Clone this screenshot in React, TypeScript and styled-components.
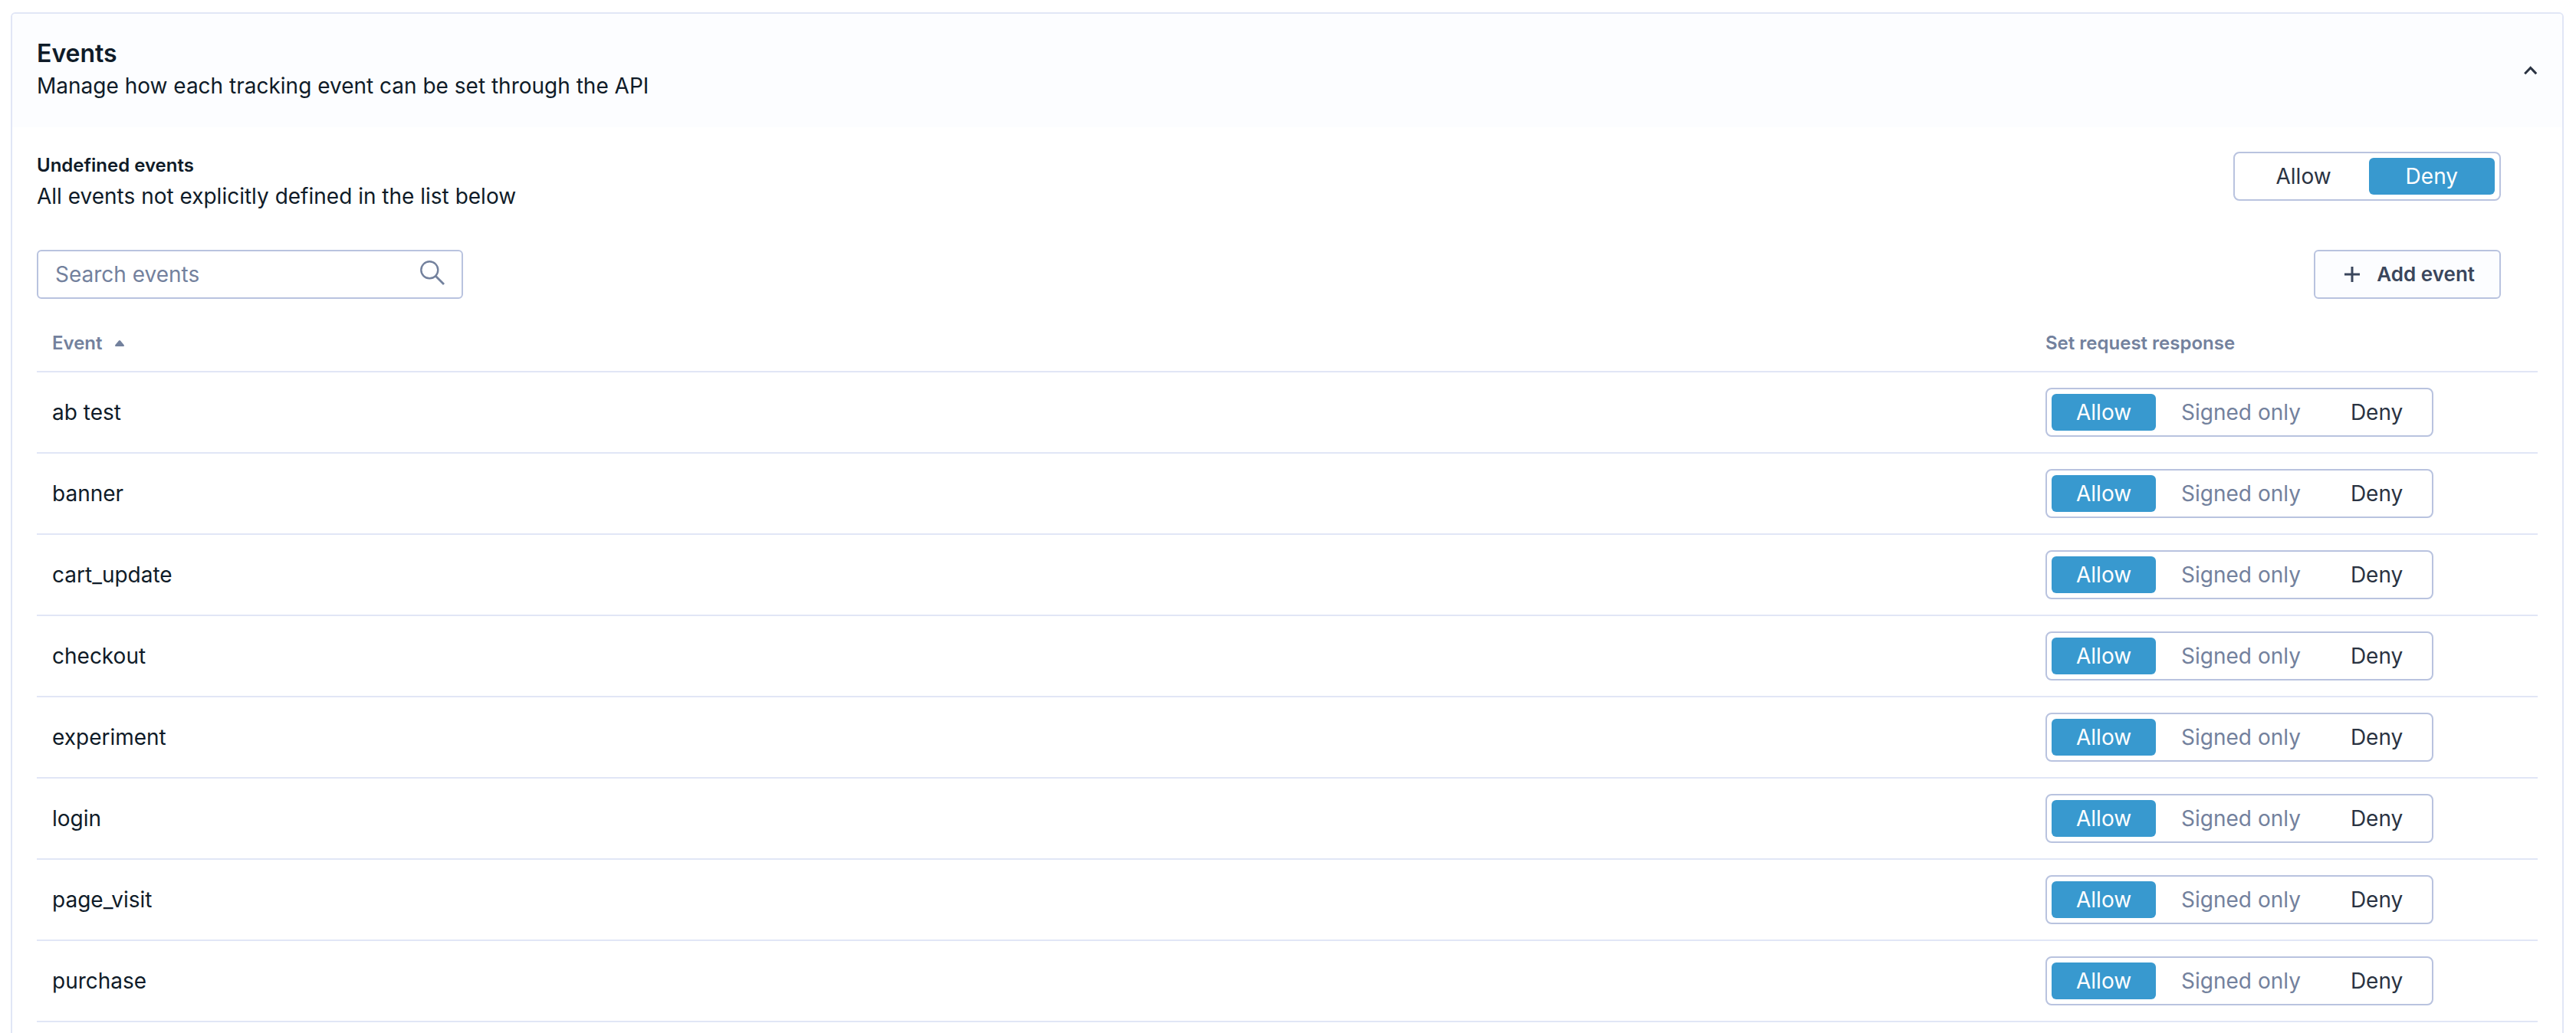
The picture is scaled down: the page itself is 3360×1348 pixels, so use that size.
import React, { useState } from "react";
import styled, { createGlobalStyle } from "styled-components";

const color = {
  ink: "#0f1b28",
  control: "#2a3342",
  button: "#3a465c",
  muted: "#73819d",
  line: "#e1e6f6",
  outline: "#b9c3df",
  tint: "#fcfdff",
  accent: "#3899cf",
};

const GlobalStyle = createGlobalStyle`
  *, *::before, *::after { box-sizing: border-box; }
  body { margin: 0; background: #fff; }
  body, button, input { font-family: Inter, "Liberation Sans", sans-serif; }
`;

const Page = styled.main`
  height: 100vh;
  overflow: hidden;
  padding: 16px 16px 0 14px;
  color: ${color.ink};
  font-size: 28px;
  line-height: 44px;
`;

const Card = styled.section`
  border: 2px solid ${color.line};
  border-radius: 6px;
`;

const CardHeader = styled.header`
  display: flex;
  align-items: center;
  justify-content: space-between;
  padding: 32px;
  background: ${color.tint};
  border-radius: 4px 4px 0 0;
`;

const Title = styled.h2`
  margin: 0;
  font-size: 32px;
  line-height: 40px;
  font-weight: 600;
`;

const Text = styled.p`
  margin: 0;
`;

const IconButton = styled.button`
  display: flex;
  padding: 0;
  border: 0;
  background: none;
  color: ${color.control};
  cursor: pointer;
`;

const CardBody = styled.div`
  padding: 32px;
`;

const Bar = styled.div`
  display: flex;
  align-items: flex-start;
  justify-content: space-between;
  padding-right: 48px;
`;

const DefaultBar = styled(Bar)`
  min-height: 128px;
`;

const Subtitle = styled.h3`
  margin: 0;
  font-size: 24px;
  line-height: 36px;
  font-weight: 600;
`;

const Group = styled.div`
  display: inline-flex;
  gap: 1px;
  height: 64px;
  padding: 6px;
  border: 2px solid ${color.outline};
  border-radius: 8px;
  background: #fff;
  vertical-align: top;
`;

const Segment = styled.button<{ $selected: boolean; $muted?: boolean; $wide?: boolean }>`
  padding: 0 ${(p) => (p.$wide ? 48 : 32)}px;
  border: 0;
  border-radius: 6px;
  background: ${(p) => (p.$selected ? color.accent : "transparent")};
  color: ${(p) => (p.$selected ? "#fff" : p.$muted ? color.muted : color.control)};
  font-size: 28px;
  line-height: 48px;
  cursor: pointer;
`;

const SearchBox = styled.label`
  display: flex;
  align-items: center;
  width: 556px;
  height: 64px;
  padding: 0 22px;
  border: 2px solid ${color.outline};
  border-radius: 6px;
  color: ${color.muted};
`;

const SearchInput = styled.input`
  flex: 1;
  min-width: 0;
  padding: 0;
  border: 0;
  outline: 0;
  background: none;
  color: ${color.ink};
  font-size: 28px;
  line-height: 44px;
  &::placeholder { color: ${color.muted}; opacity: 1; }
`;

const AddButton = styled.button`
  display: flex;
  align-items: center;
  gap: 16px;
  height: 64px;
  padding: 0 32px;
  border: 2px solid ${color.outline};
  border-radius: 6px;
  background: ${color.tint};
  color: ${color.button};
  font-size: 26px;
  line-height: 44px;
  font-weight: 600;
  cursor: pointer;
`;

const Table = styled.table`
  width: 100%;
  margin-top: 20px;
  border-collapse: separate;
  border-spacing: 0;
  table-layout: fixed;
`;

const HeadCell = styled.th<{ $width?: number }>`
  width: ${(p) => (p.$width ? `${p.$width}px` : "auto")};
  height: 76px;
  padding: 2px 20px 0;
  border-bottom: 2px solid ${color.line};
  color: ${color.muted};
  font-size: 24px;
  line-height: 36px;
  font-weight: 600;
  text-align: left;
`;

const SortButton = styled.button`
  display: flex;
  align-items: center;
  gap: 16px;
  padding: 0;
  border: 0;
  background: none;
  color: inherit;
  font: inherit;
  cursor: pointer;
`;

const Cell = styled.td`
  height: 106px;
  padding: 0 20px;
  border-bottom: 2px solid ${color.line};
  vertical-align: middle;
`;

type Choice = "Allow" | "Signed only" | "Deny";

interface ToggleProps {
  label: string;
  options: Choice[];
  initial: Choice;
  wide?: boolean;
}

function Toggle({ label, options, initial, wide }: ToggleProps) {
  const [value, setValue] = useState<Choice>(initial);
  return (
    <Group role="group" aria-label={label}>
      {options.map((option) => (
        <Segment
          key={option}
          type="button"
          aria-pressed={option === value}
          $selected={option === value}
          $muted={option === "Signed only"}
          $wide={wide}
          onClick={() => setValue(option)}
        >
          {option}
        </Segment>
      ))}
    </Group>
  );
}

const ChevronUp = () => (
  <svg width="18" height="12" viewBox="0 0 18 12" fill="none" aria-hidden="true">
    <path d="M1.200 10.200 L8.700 2.400 L16.200 10.200" stroke="currentColor" strokeWidth="3" />
  </svg>
);

const SearchIcon = () => (
  <svg width="32" height="36" viewBox="0 0 32 36" fill="none" aria-hidden="true">
    <circle cx="12.300" cy="12.300" r="11" stroke="currentColor" strokeWidth="2.400" />
    <path d="M20 20 L31 31" stroke="currentColor" strokeWidth="2.800" />
  </svg>
);

const PlusIcon = () => (
  <svg width="32" height="32" viewBox="0 0 32 32" fill="none" aria-hidden="true">
    <path d="M16 6 V26 M6 16 H26" stroke="currentColor" strokeWidth="3" />
  </svg>
);

const SortIcon = () => (
  <svg width="12" height="8" viewBox="0 0 12 8" fill="currentColor" aria-hidden="true">
    <path d="M5 0.600 Q6 -0.400 7 0.600 L11.600 6 Q12.500 8 11 8 H1 Q-0.500 8 0.400 6 Z" />
  </svg>
);

const events = [
  "ab test",
  "banner",
  "cart_update",
  "checkout",
  "experiment",
  "login",
  "page_visit",
  "purchase",
];

export default function App() {
  const [query, setQuery] = useState("");
  const [open, setOpen] = useState(true);
  const [ascending, setAscending] = useState(true);

  const rows = events.filter((name) => name.includes(query.toLowerCase()));
  if (!ascending) rows.reverse();

  return (
    <>
      <GlobalStyle />
      <Page>
        <Card>
          <CardHeader>
            <div>
              <Title>Events</Title>
              <Text>Manage how each tracking event can be set through the API</Text>
            </div>
            <IconButton
              type="button"
              aria-label="Toggle section"
              aria-expanded={open}
              onClick={() => setOpen(!open)}
            >
              <ChevronUp />
            </IconButton>
          </CardHeader>
          {open && (
            <CardBody>
              <DefaultBar>
                <div>
                  <Subtitle>Undefined events</Subtitle>
                  <Text>All events not explicitly defined in the list below</Text>
                </div>
                <Toggle label="Undefined events" options={["Allow", "Deny"]} initial="Deny" wide />
              </DefaultBar>
              <Bar>
                <SearchBox>
                  <SearchInput
                    aria-label="Search events"
                    placeholder="Search events"
                    value={query}
                    onChange={(e) => setQuery(e.target.value)}
                  />
                  <SearchIcon />
                </SearchBox>
                <AddButton type="button">
                  <PlusIcon />
                  Add event
                </AddButton>
              </Bar>
              <Table>
                <thead>
                  <tr>
                    <HeadCell aria-sort={ascending ? "ascending" : "descending"}>
                      <SortButton type="button" onClick={() => setAscending(!ascending)}>
                        Event
                        <SortIcon />
                      </SortButton>
                    </HeadCell>
                    <HeadCell $width={662}>Set request response</HeadCell>
                  </tr>
                </thead>
                <tbody>
                  {rows.map((name) => (
                    <tr key={name}>
                      <Cell>{name}</Cell>
                      <Cell>
                        <Toggle label={name} options={["Allow", "Signed only", "Deny"]} initial="Allow" />
                      </Cell>
                    </tr>
                  ))}
                </tbody>
              </Table>
            </CardBody>
          )}
        </Card>
      </Page>
    </>
  );
}
